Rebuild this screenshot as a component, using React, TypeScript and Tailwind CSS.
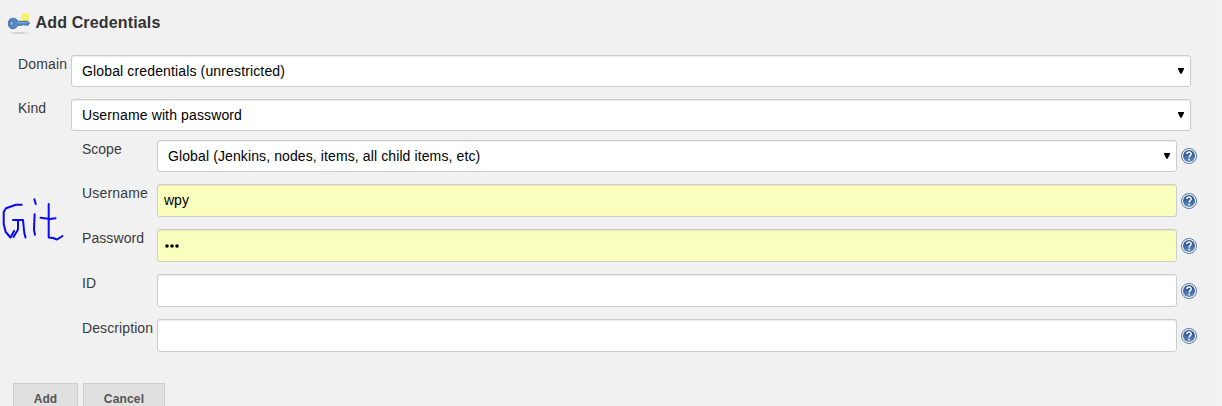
import React from "react";

const fieldBase =
  "flex items-center rounded-[3px] border border-[#cccccc] shadow-[inset_0_1px_1px_rgba(0,0,0,0.075)] text-[14px] leading-[20px] text-black";

function Select({ text, className, textClass }: { text: string; className: string; textClass: string }) {
  return (
    <div className={`${fieldBase} h-8 justify-between bg-white pl-[10px] pr-[6px] ${className}`}>
      <span className={`whitespace-nowrap ${textClass}`}>{text}</span>
      <svg width="6" height="6" viewBox="0 0 6 6">
        <path d="M0 0H6V1L3.6 5.8H2.4L0 1Z" fill="#000" />
      </svg>
    </div>
  );
}

function Help() {
  return (
    <svg width="16" height="16" viewBox="0 0 16 16" className="ml-1 shrink-0">
      <defs>
        <linearGradient id="disc" x1="0" y1="0" x2="0" y2="1">
          <stop offset="0" stopColor="#1f4b8a" />
          <stop offset="1" stopColor="#6489c0" />
        </linearGradient>
      </defs>
      <circle cx="8" cy="8" r="7.5" fill="#fff" stroke="#3e68a3" strokeWidth="0.9" />
      <circle cx="8" cy="8" r="6" fill="url(#disc)" />
      <path d="M5.8 6C6 3.3 10.3 3.4 10.2 5.9C10.1 7.6 8.1 7.6 8.1 9.5" fill="none" stroke="#fff" strokeWidth="1.5" />
      <rect x="7.3" y="10.7" width="1.6" height="1.7" fill="#fff" />
    </svg>
  );
}

function KeyIcon() {
  return (
    <svg width="24" height="24" viewBox="0 0 24 24" className="shrink-0">
      <defs>
        <radialGradient id="glow">
          <stop offset="0" stopColor="#fffde0" />
          <stop offset="0.3" stopColor="#fff87a" />
          <stop offset="0.55" stopColor="#fbee35" />
          <stop offset="0.8" stopColor="#fdf58a" />
          <stop offset="1" stopColor="#fdf58a" stopOpacity="0" />
        </radialGradient>
        <radialGradient id="shade">
          <stop offset="0" stopColor="#999" stopOpacity="0.6" />
          <stop offset="1" stopColor="#999" stopOpacity="0" />
        </radialGradient>
      </defs>
      <ellipse cx="12" cy="22" rx="11" ry="1.4" fill="url(#shade)" />
      <circle cx="18.3" cy="6.4" r="4.8" fill="url(#glow)" />
      <path
        d="M6 7.2C8.5 7.2 10 8.5 10.7 10.2H20.7L22.6 12L20.9 14.3H19L18.3 13.5L17.4 14.3L16.5 13.5L15.5 14.3H10.7C9.8 16.4 8.3 17.8 6 17.8C2.7 17.8 1.3 15.3 1.3 12.5S2.7 7.2 6 7.2Z"
        fill="#5489c6"
        stroke="#34639d"
        strokeWidth="0.8"
      />
      <path d="M10.4 11.6H20.7" stroke="#8fb6de" strokeWidth="0.7" />
      <ellipse cx="4.8" cy="12.5" rx="1.2" ry="2.4" fill="#dce5ee" stroke="#28558e" strokeWidth="0.8" />
    </svg>
  );
}

function Label({ children, className }: { children: string; className: string }) {
  return (
    <span className={`block shrink-0 self-start whitespace-nowrap text-[14px] leading-[20px] text-[#3a3a3a] ${className}`}>
      {children}
    </span>
  );
}

function InputRow({ label, labelClass, children, filled }: {
  label: string;
  labelClass: string;
  children?: React.ReactNode;
  filled?: boolean;
}) {
  return (
    <div className="flex h-[33px] items-center">
      <Label className={`w-[75px] ${labelClass}`}>{label}</Label>
      <div className={`${fieldBase} h-[33px] w-[1020px] px-[6px] pb-px ${filled ? "bg-[#faffbd]" : "bg-white"}`}>{children}</div>
      <Help />
    </div>
  );
}

export default function App() {
  return (
    <div className="relative h-[406px] w-[1222px] overflow-hidden border-r-8 border-[#f3f3f3] bg-[#f1f1f1] font-['Liberation_Sans',Arial,sans-serif]">
      <header className="flex h-[55px] items-start pl-[7px] pt-[11px]">
        <KeyIcon />
        <h1 className="ml-[4.5px] mt-px whitespace-nowrap text-[16px] font-bold leading-[22px] tracking-[0.15px] text-[#333333]">
          Add Credentials
        </h1>
      </header>
      <div className="flex flex-col gap-3 pl-[18px]">
        <div className="flex h-8">
          <Label className="-mt-px w-[53px] tracking-[0.15px]">Domain</Label>
          <Select text="Global credentials (unrestricted)" className="w-[1120px]" textClass="tracking-[0.14px]" />
        </div>
        <div className="flex h-8">
          <Label className="-mt-px w-[53px]">Kind</Label>
          <Select text="Username with password" className="w-[1120px]" textClass="tracking-[0.13px]" />
        </div>
      </div>
      <div className="flex flex-col gap-3 pl-[82px] pt-[9px]">
        <div className="flex h-8 items-center">
          <Label className="-mt-px w-[75px]">Scope</Label>
          <Select text="Global (Jenkins, nodes, items, all child items, etc)" className="w-[1020px]" textClass="tracking-[0.11px]" />
          <Help />
        </div>
        <InputRow label="Username" labelClass="-mt-px tracking-[0.18px]" filled>
          <span className="-mt-px">wpy</span>
        </InputRow>
        <InputRow label="Password" labelClass="-mt-px tracking-[0.08px]" filled>
          <svg width="15" height="4" viewBox="0 0 15 4" className="ml-[1px] mt-px" aria-label="3 characters">
            <circle cx="2" cy="2" r="1.8" />
            <circle cx="7" cy="2" r="1.8" />
            <circle cx="12" cy="2" r="1.8" />
          </svg>
        </InputRow>
        <InputRow label="ID" labelClass="-mt-px" />
        <InputRow label="Description" labelClass="-mt-px tracking-[0.1px]" />
      </div>
      <div className="flex gap-[5px] pl-[13px] pt-[31px] text-[12px] font-bold leading-[29px] text-[#555555]">
        <button className="h-8 w-[65px] border border-[#cccccc] bg-[#e0e0e0] tracking-[0.1px]">Add</button>
        <button className="h-8 w-[82px] border border-[#cccccc] bg-[#e0e0e0] tracking-[0.15px]">Cancel</button>
      </div>
      <svg
        width="80"
        height="60"
        viewBox="0 0 80 60"
        className="absolute left-0 top-[190px]"
        fill="none"
        stroke="#0909f2"
        strokeWidth="2"
        strokeLinecap="round"
        strokeLinejoin="round"
      >
        <path d="M21.7 14.7H16L6 18.3L3.7 22V34L5.7 42L10.5 47.5L14 41" />
        <path d="M13.5 47L18 39.5V30H13M18 30H23L24.3 43L25.5 47.5" />
        <path d="M34.3 9.3L35.8 14M34.6 24.3L34 40L35 44.7" />
        <path d="M48.7 14V47.5L53 48L57 49.5L62.5 46M40.5 27.7L50 29L55.5 28.3" />
      </svg>
    </div>
  );
}
